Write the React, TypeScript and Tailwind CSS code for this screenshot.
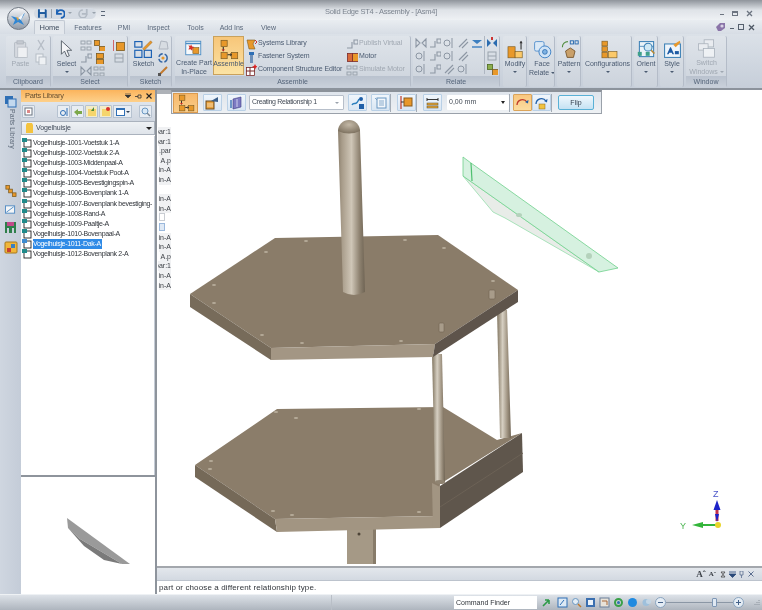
import React from "react";

const O = "#e8982a", OL = "#fbc96a", G = "#9aa3ad", BD = "#7a5a20";

function Svg({ s = 16, children, className = "" }: { s?: number; children: React.ReactNode; className?: string }) {
  return <svg width={s} height={s} viewBox={`0 0 ${s} ${s}`} className={`shrink-0 ${className}`}>{children}</svg>;
}
const R = ({ x, y, w, h, f = O, st = BD }: { x: number; y: number; w: number; h: number; f?: string; st?: string }) => (
  <rect x={x + 0.5} y={y + 0.5} width={w} height={h} fill={f} stroke={st} strokeWidth="0.8" />
);

/* Assemble icon – three orange blocks joined by a dark arrow */
const AssembleIcon = ({ s = 24 }: { s?: number }) => (
  <svg width={s} height={s} viewBox="0 0 24 24" className="shrink-0">
    <R x={3} y={1} w={7} h={7} />
    <R x={3} y={15} w={7} h={7} />
    <R x={15} y={15} w={7} h={7} />
    <path d="M6 9v5M11 18h3" stroke="#222" strokeWidth="1.2" fill="none" />
    <path d="M14 16l2 2-2 2z" fill="#222" />
    <path d="M4 12l2 2 2-2z" fill="#c22" />
  </svg>
);

const Mini = ({ k, dim = false }: { k: string; dim?: boolean }) => {
  const c = dim ? "#a6aeb8" : "#2e6fb5";
  const p = dim ? "#b8bfc8" : O;
  const x = {
    orangeCube: <><R x={3} y={3} w={8} h={8} f={p} st={dim ? "#98a0aa" : BD} /><path d="M0 1v11" stroke={dim ? "#98a0aa" : "#c33"} strokeWidth="1.4" /></>,
    pair: <><R x={1} y={1} w={5} h={5} f={p} st={dim ? "#98a0aa" : BD} /><R x={6} y={7} w={6} h={5} f={p} st={dim ? "#98a0aa" : BD} /></>,
    stack: <><R x={3} y={1} w={7} h={5} f={p} st={dim ? "#98a0aa" : BD} /><R x={3} y={7} w={7} h={5} f={p} st={dim ? "#98a0aa" : BD} /></>,
    bolt: <><rect x="4" y="1" width="5" height="3" fill={c} /><rect x="5" y="4" width="3" height="8" fill={dim ? "#b5bcc6" : "#6d8fb8"} /></>,
    sys: <><path d="M2 2h8l-2 4 2 5H4z" fill={p} stroke={dim ? "#98a0aa" : BD} strokeWidth=".6" /><path d="M10 2l2 2-2 2" stroke="#c33" fill="none" /></>,
    struct: <><R x={1} y={3} w={8} h={8} f="#fff" st="#7a2a2a" /><path d="M1 7h9M5 3v8" stroke="#7a2a2a" /><path d="M10 0l1 2 2 .5-2 1-1 2-1-2-2-1 2-.5z" fill="#d22" /></>,
    motor: <><R x={1} y={2} w={5} h={8} f="#d86a3a" st="#7a2a2a" /><R x={6} y={2} w={6} h={8} f={O} st="#7a2a2a" /></>,
    grid: <><rect x="1" y="2" width="4" height="3" fill="none" stroke={G} /><rect x="7" y="2" width="4" height="3" fill="none" stroke={G} /><rect x="1" y="8" width="4" height="3" fill="none" stroke={G} /><rect x="7" y="8" width="4" height="3" fill="none" stroke={G} /></>,
    rel: <><path d="M1 2l4 4-4 4zM11 2L7 6l4 4z" fill="none" stroke="#8d97a4" strokeWidth="1.1" /></>,
    rel2: <><path d="M1 10h5V4M8 2h4v4H8z" fill="none" stroke="#8d97a4" strokeWidth="1.1" /></>,
    rel3: <><circle cx="4" cy="6" r="3" fill="none" stroke="#8d97a4" /><path d="M9 1v10" stroke="#8d97a4" /></>,
    rel4: <><path d="M2 10L10 2M5 11l6-6" stroke="#8d97a4" strokeWidth="1.1" /></>,
    relB: <><path d="M1 3h10L6 7z" fill="#3d7fc0" /><path d="M1 10h10" stroke="#3d7fc0" strokeWidth="1.4" /></>,
    relC: <><path d="M1 2l4 4-4 4z" fill="#2b6cb0" /><path d="M11 2L7 6l4 4z" fill="#2b6cb0" /><path d="M6 0v3" stroke="#c33" strokeWidth="2" /></>,
    relD: <><R x={1} y={1} w={5} h={5} f="#8cae4d" st="#4d6a20" /><R x={6} y={6} w={6} h={6} f={O} /></>,
    relE: <><rect x="2" y="2" width="8" height="8" fill="none" stroke="#9aa3ad" /><path d="M2 6h8" stroke="#9aa3ad" /></>,
    cut: <><path d="M3 1l6 10M9 1L3 11" stroke="#b6bdc6" strokeWidth="1.4" /></>,
    copy: <><rect x="1" y="1" width="7" height="8" fill="#eef1f4" stroke="#b6bdc6" /><rect x="4" y="4" width="7" height="8" fill="#eef1f4" stroke="#b6bdc6" /></>,
    sk1: <><path d="M2 10l2-8 6 1 1 7z" fill="#d7dce2" stroke="#aeb5bf" /></>,
    sk2: <><circle cx="6" cy="6" r="4.2" fill="none" stroke="#3566a5" strokeWidth="1.4" strokeDasharray="5 2" /><circle cx="6" cy="6" r="1.6" fill={O} /></>,
    sk3: <><path d="M2 10L10 2" stroke="#c2792e" strokeWidth="2" /><rect x="1" y="8" width="3" height="3" fill="#555" /></>,
  } as Record<string, React.ReactNode>;
  return <Svg s={12}>{x[k]}</Svg>;
};

const Label = ({ children, dim = false, className = "" }: { children: React.ReactNode; dim?: boolean; className?: string }) => (
  <span className={`text-[7px] leading-[8.5px] whitespace-nowrap text-center ${dim ? "text-[#a0a8b2]" : "text-[#4a5a70]"} ${className}`}>{children}</span>
);
const Caret = ({ dim = false }: { dim?: boolean }) => <span className={`block w-0 h-0 border-x-[2px] border-x-transparent border-t-[2px] mt-[2px] ${dim ? "border-t-[#a0a8b2]" : "border-t-[#4a5a70]"}`} />;
const InlineCaret = ({ dim = false }: { dim?: boolean }) => <span className={`inline-block align-middle ml-[2px] w-0 h-0 border-x-[2px] border-x-transparent border-t-[2px] ${dim ? "border-t-[#a0a8b2]" : "border-t-[#4a5a70]"}`} />;

const Group = ({ w, title, children, className = "" }: { w: number; title?: string; children: React.ReactNode; className?: string }) => (
  <div className={`flex flex-col shrink-0 h-[51px] rounded-[2px] bg-gradient-to-b from-[#dfe4ea] to-[#ccd3dc] border-r border-[#b4bcc8] ${className}`} style={{ width: w }}>
    <div className="flex-1 flex min-h-0 overflow-hidden">{children}</div>
    {title ? <div className="h-[11px] bg-gradient-to-b from-[#b9c2ce] to-[#c9d0da] text-center text-[7px] leading-[11px] text-[#55657a]">{title}</div> : null}
  </div>
);

const BigBtn = ({ label, children, caret = false, dim = false, w }: { label: React.ReactNode; children: React.ReactNode; caret?: boolean; dim?: boolean; w?: number }) => (
  <div className="flex flex-col items-center pt-[3px] shrink-0" style={{ width: w }}>
    <div className="h-[20px] flex items-center justify-center [&>svg]:h-[19px] [&>svg]:w-auto">{children}</div>
    <Label dim={dim} className="mt-[1px]">{label}</Label>
    {caret ? <Caret dim={dim} /> : null}
  </div>
);

const SmallRow = ({ k, t, dim = false }: { k: string; t: string; dim?: boolean }) => (
  <div className="h-[13px] flex items-center gap-[1px] whitespace-nowrap">
    <Mini k={k} dim={dim} />
    <span className={`text-[7px] tracking-[-0.1px] ${dim ? "text-[#a0a8b2]" : "text-[#4a5a70]"}`}>{t}</span>
  </div>
);

const ModifyIcon = () => (
  <svg width="24" height="24" viewBox="0 0 24 24"><R x={2} y={8} w={9} h={14} /><R x={11} y={14} w={9} h={8} f={OL} /><path d="M19 2v10" stroke="#333" strokeWidth="1.4" /><path d="M17 4l2-3 2 3z" fill="#333" /></svg>
);
const FaceIcon = () => (
  <svg width="24" height="24" viewBox="0 0 24 24"><rect x="2" y="2" width="12" height="12" rx="2" fill="#dbe9f6" stroke="#5a93cf" strokeWidth="1.2" /><circle cx="15" cy="15" r="7.5" fill="#cfe3f6" stroke="#3f82c6" strokeWidth="1.2" /><circle cx="15" cy="15" r="3" fill="#7fb2e2" stroke="#2a6cb0" /></svg>
);
const PatternIcon = () => (
  <svg width="24" height="24" viewBox="0 0 24 24"><rect x="13" y="1" width="4" height="4" fill="none" stroke="#2a6cb0" strokeWidth="1.2" /><rect x="19" y="1" width="4" height="4" fill="none" stroke="#2a6cb0" strokeWidth="1.2" /><path d="M3 9a7 7 0 0 1 7-7" stroke="#4d8a3a" strokeWidth="1.4" fill="none" /><path d="M13 10l6 4-2 8H9L7 14z" fill="#c9a06a" stroke="#6a4a20" /></svg>
);
const ConfigIcon = () => (
  <svg width="30" height="24" viewBox="0 0 30 24"><R x={7} y={1} w={7} h={6} /><R x={7} y={8} w={7} h={6} /><R x={7} y={15} w={7} h={7} /><R x={15} y={14} w={11} h={8} f={OL} /></svg>
);
const OrientIcon = () => (
  <svg width="24" height="24" viewBox="0 0 24 24"><rect x="3" y="2" width="18" height="19" fill="#eaf3f8" stroke="#3a7fb5" strokeWidth="1.3" /><path d="M3 8h18" stroke="#3a7fb5" /><rect x="1" y="15" width="5" height="5" fill="#3fa08a" /><rect x="11" y="15" width="5" height="5" fill="#3fa08a" /><circle cx="14" cy="9" r="5" fill="#cfe8f4" stroke="#3a7fb5" strokeWidth="1.3" /><path d="M18 13l4 4" stroke="#b8862f" strokeWidth="2" /></svg>
);
const StyleIcon = () => (
  <svg width="24" height="24" viewBox="0 0 24 24"><rect x="2" y="5" width="20" height="17" fill="#eef5fb" stroke="#3a7fb5" strokeWidth="1.3" /><path d="M13 6L21 1l1 2-6 6z" fill={O} /><path d="M9 9l-4 9h2l1-2h3l1 2h2L10 9z" fill="#1c5aa3" /><rect x="15" y="14" width="5" height="4" fill="#1c5aa3" /></svg>
);
const SwitchIcon = () => (
  <svg width="24" height="24" viewBox="0 0 24 24"><rect x="9" y="1" width="12" height="9" fill="#e9ecf0" stroke="#a9b1bb" /><rect x="2" y="6" width="12" height="8" fill="#e9ecf0" stroke="#a9b1bb" /><rect x="8" y="12" width="14" height="11" fill="#eef1f4" stroke="#a9b1bb" /></svg>
);
const PasteIcon = () => (
  <svg width="20" height="24" viewBox="0 0 20 24"><rect x="2" y="3" width="14" height="19" rx="1" fill="#d5d9df" stroke="#adb4bd" /><rect x="5" y="1" width="8" height="4" fill="#c4c9d0" stroke="#adb4bd" /><rect x="6" y="9" width="12" height="13" fill="#eef0f3" stroke="#b8bec6" /></svg>
);
const CursorIcon = () => (
  <svg width="18" height="24" viewBox="0 0 18 24"><path d="M3 1v17l4-4 3 7 3-1-3-7h6z" fill="#f4f5f7" stroke="#4d5560" strokeWidth="1.1" /></svg>
);
const SketchIcon = () => (
  <svg width="24" height="24" viewBox="0 0 24 24"><rect x="1" y="2" width="9" height="7" fill="none" stroke="#1d62b4" strokeWidth="1.5" /><rect x="1" y="13" width="9" height="9" fill="none" stroke="#1d62b4" strokeWidth="1.5" /><rect x="13" y="13" width="9" height="9" fill="none" stroke="#1d62b4" strokeWidth="1.5" /><path d="M11 11L21 1l2 2-10 10z" fill={O} stroke="#8a5a1c" strokeWidth=".5" /></svg>
);
const CreatePartIcon = () => (
  <svg width="22" height="19" viewBox="0 0 28 24"><rect x="3" y="3" width="20" height="18" fill="#f7fafc" stroke="#4a8cc4" strokeWidth="1.2" /><path d="M3 6h20" stroke="#4a8cc4" strokeWidth="2" /><R x={12} y={11} w={8} h={8} /><path d="M10 7l1.5 3 3 .5-2.5 2-.5 3-2-2-3 .5 1.5-3-1.5-2.5 3 .5z" fill="#d8322b" /></svg>
);

const Ribbon = () => (
  <div className="h-[56px] shrink-0 flex gap-[2px] pl-[6px] pt-[2px] bg-gradient-to-b from-[#dbe1e8] to-[#c6ced9] border-b-2 border-[#8c939c]">
    <Group w={45} title="Clipboard">
      <BigBtn label="Paste" dim w={29}><PasteIcon /></BigBtn>
      <div className="flex flex-col gap-[2px] pt-[3px]"><Mini k="cut" /><Mini k="copy" /></div>
    </Group>
    <Group w={75} title="Select">
      <BigBtn label="Select" caret w={27}><CursorIcon /></BigBtn>
      <div className="grid grid-cols-[13px_13px_20px] gap-y-[1px] pt-[3px] h-fit">
        <Mini k="grid" /><Mini k="pair" /><span className="pl-[7px]"><Mini k="orangeCube" /></span>
        <Mini k="rel2" /><Mini k="stack" /><span className="pl-[7px]"><Mini k="relE" /></span>
        <Mini k="rel" /><Mini k="grid" />
      </div>
    </Group>
    <Group w={42} title="Sketch">
      <BigBtn label="Sketch" w={27}><SketchIcon /></BigBtn>
      <div className="flex flex-col gap-[1px] pt-[3px]"><Mini k="sk1" /><Mini k="sk2" /><Mini k="sk3" /></div>
    </Group>
    <Group w={236} title="Assemble" className="ml-[1px]">
      <div className="w-[38px] shrink-0 flex flex-col items-center pt-[3px]">
        <CreatePartIcon />
        <Label className="mt-[2px]">Create Part<br />In-Place</Label>
      </div>
      <div className="w-[31px] h-[39px] shrink-0 flex flex-col items-center pt-[2px] bg-gradient-to-b from-[#f7c679] to-[#fbe3a4] border border-[#c9a15c]">
        <AssembleIcon s={21} />
        <Label className="text-[#3f4d60]">Assemble</Label>
      </div>
      <div className="flex flex-col pl-[1px] pt-[1px] w-[102px] shrink-0">
        <SmallRow k="sys" t="Systems Library" />
        <SmallRow k="bolt" t="Fastener System" />
        <SmallRow k="struct" t="Component Structure Editor" />
      </div>
      <div className="flex flex-col pt-[1px]">
        <SmallRow k="rel2" t="Publish Virtual" dim />
        <SmallRow k="motor" t="Motor" />
        <SmallRow k="grid" t="Simulate Motor" dim />
      </div>
    </Group>
    <Group w={87} title="Relate">
      <div className="grid grid-cols-5 gap-x-[2px] gap-y-[1px] pl-[2px] pt-[1px] h-fit">
        <Mini k="rel" /><Mini k="rel2" /><Mini k="rel3" /><Mini k="rel4" /><Mini k="relB" />
        <Mini k="rel3" /><Mini k="rel2" /><Mini k="rel3" /><Mini k="rel4" /><span />
        <Mini k="rel3" /><Mini k="rel2" /><Mini k="rel4" /><Mini k="rel3" /><span />
      </div>
      <div className="flex flex-col gap-[1px] pl-[1px] pt-[1px] border-l border-[#aeb6c1] ml-[1px] h-[38px]">
        <Mini k="relC" /><Mini k="relE" /><Mini k="relD" />
      </div>
    </Group>
    <Group w={24} className="ml-[1px]"><BigBtn label="Modify" caret w={24}><ModifyIcon /></BigBtn></Group>
    <Group w={26}><BigBtn label={<>Face<br />Relate<InlineCaret /></>} w={26}><FaceIcon /></BigBtn></Group>
    <Group w={24}><BigBtn label="Pattern" caret w={24}><PatternIcon /></BigBtn></Group>
    <Group w={49}><BigBtn label="Configurations" caret w={49}><ConfigIcon /></BigBtn></Group>
    <Group w={24}><BigBtn label="Orient" caret w={24}><OrientIcon /></BigBtn></Group>
    <Group w={24}><BigBtn label="Style" caret w={24}><StyleIcon /></BigBtn></Group>
    <Group w={41} title="Window"><BigBtn dim label={<>Switch<br />Windows<InlineCaret dim /></>} w={41}><SwitchIcon /></BigBtn></Group>
  </div>
);

const TitleBar = () => (
  <div className="h-[20px] shrink-0 flex items-center bg-gradient-to-b from-[#8f949b] via-[#dfe3e8] to-[#eef1f4] pt-[3px] relative">
    <div className="absolute left-[7px] top-[7px] w-[23px] h-[23px] rounded-full border border-[#6f7782] bg-gradient-to-b from-[#f7f8fa] to-[#8f9aa8] flex items-center justify-center z-10">
      <svg width="17" height="17" viewBox="0 0 17 17"><path d="M1 6l7 2 7-5-4 7 3 5-6-3-5 3 2-5z" fill="#2f86d4" /><path d="M6 7l3 1-1 3z" fill="#f0a530" /><path d="M8 8l6-5-3 7z" fill="#f4f7fa" /></svg>
    </div>
    <div className="ml-[34px] w-[62px] h-[11px] rounded-full bg-[#d5dbe3] flex items-center gap-[3px] pl-[3px] mt-[3px]">
      <svg width="11" height="11" viewBox="0 0 11 11"><path d="M1 1h8l1 1v8H1z" fill="#1d5a9e" /><rect x="3" y="1" width="5" height="3" fill="#e9eef4" /><rect x="3" y="6" width="5" height="4" fill="#cfd8e2" /></svg>
      <span className="w-px h-[9px] bg-[#9aa3ad]" />
      <svg width="11" height="11" viewBox="0 0 11 11"><path d="M2 1v5h5" stroke="#1d62b4" strokeWidth="1.8" fill="none" /><path d="M2 6a4 4 0 1 1 4 4" stroke="#1d62b4" strokeWidth="2" fill="none" /></svg>
      <span className="block w-0 h-0 border-x-[2px] border-x-transparent border-t-[2px] border-t-[#9aa3ad]" />
      <svg width="11" height="10" viewBox="0 0 11 10" className="ml-[3px]"><path d="M9 1v5H4" stroke="#b2bac4" strokeWidth="1.8" fill="none" /><path d="M9 6a4 4 0 1 1-4-4" stroke="#b2bac4" strokeWidth="1.6" fill="none" /></svg>
      <span className="block w-0 h-0 border-x-[2px] border-x-transparent border-t-[2px] border-t-[#9aa3ad]" />
    </div>
    <span className="ml-[5px] mt-[3px] block w-[4px] h-[5px] border-t border-b border-[#5a6676]" />
    <span className="absolute left-[325px] top-[7px] text-[7.5px] leading-[10px] text-[#7d8590] whitespace-nowrap tracking-[-0.26px]">Solid Edge ST4 - Assembly - [Asm4]</span>
    <div className="ml-auto flex items-center gap-[8px] pr-[9px] mt-[3px] text-[#6c7480]">
      <span className="block w-[4px] h-[1px] bg-[#6c7480] mt-[3px]" />
      <span className="block w-[6px] h-[5px] border border-t-2 border-[#6c7480]" />
      <svg width="7" height="7" viewBox="0 0 7 7"><path d="M1 1l5 5M6 1L1 6" stroke="#6c7480" strokeWidth="1.3" /></svg>
    </div>
  </div>
);

const TabRow = () => {
  const tabs: [string, number, number][] = [["Features", 10, 26], ["PMI", 17, 12], ["Inspect", 17, 23], ["Tools", 17, 17], ["Add Ins", 16, 23], ["View", 18, 15]];
  return (
    <div className="h-[14px] shrink-0 flex items-end bg-gradient-to-b from-[#e9edf1] to-[#d7dde5] pl-[34px]">
      <div className="w-[31px] h-[14px] bg-[#e4e8ed] border border-b-0 border-[#c2c9d3] rounded-t-[2px] text-center text-[7.5px] leading-[13px] text-[#3d4a5c]">Home</div>
      {tabs.map(([t, m, w]) => (
        <span key={t} className="flex justify-center whitespace-nowrap text-[7px] leading-[13px] text-[#5a687b]" style={{ marginLeft: m, width: w }}>{t}</span>
      ))}
      <div className="ml-auto flex items-center gap-[4px] pr-[7px] h-[14px]">
        <svg width="11" height="10" viewBox="0 0 11 10"><path d="M1 5l4-4h5v5l-4 3H3z" fill="#8a74a8" /><circle cx="7" cy="4" r="1.6" fill="#d9d2e6" /></svg>
        <span className="block w-[4px] h-[1px] bg-[#55606e] mt-[3px]" />
        <span className="block w-[6px] h-[6px] border border-[#55606e]" />
        <svg width="7" height="7" viewBox="0 0 7 7"><path d="M1 1l5 5M6 1L1 6" stroke="#4d5764" strokeWidth="1.3" /></svg>
      </div>
    </div>
  );
};

const PARTS = ["1001-Voetstuk 1-A", "1002-Voetstuk 2-A", "1003-Middenpaal-A", "1004-Voetstuk Poot-A", "1005-Bevestigingspin-A", "1006-Bovenplank 1-A", "1007-Bovenplank bevestiging-", "1008-Rand-A", "1009-Paaltje-A", "1010-Bovenpaal-A", "1011-Dak-A", "1012-Bovenplank 2-A"];

const DocIcon = ({ sel }: { sel?: boolean }) => (
  <svg width="10" height="10" viewBox="0 0 10 10" className="shrink-0">
    <rect x="2" y="2" width="7" height="7" fill="#fff" stroke="#222" strokeWidth=".9" />
    <rect x="0" y="0" width="5" height="4" fill={sel ? "#3d8bd0" : "#1f8a8a"} />
  </svg>
);

const Rail = () => (
  <div className="w-[21px] shrink-0 bg-gradient-to-r from-[#cfd6e0] to-[#c4ccd8] flex flex-col items-center pt-[5px]">
    <svg width="13" height="13" viewBox="0 0 13 13"><rect x="1" y="1" width="8" height="8" fill="#2f6fb5" /><rect x="4" y="4" width="8" height="8" fill="#c3d8ee" stroke="#2f6fb5" /></svg>
    <span className="[writing-mode:vertical-rl] text-[7px] leading-[10px] text-[#5e6a7a] mt-[1px] ml-[2px] whitespace-nowrap">Parts Library</span>
    <svg width="13" height="12" viewBox="0 0 13 13" className="mt-[36px]"><R x={1} y={0} w={4} h={4} /><R x={4} y={4} w={4} h={4} /><R x={8} y={8} w={4} h={4} /></svg>
    <svg width="13" height="11" viewBox="0 0 13 12" className="mt-[7px]"><rect x="1" y="2" width="10" height="8" fill="#f4f6f8" stroke="#4e89c2" /><path d="M2 9l8-6" stroke="#4e89c2" /></svg>
    <svg width="13" height="13" viewBox="0 0 13 13" className="mt-[6px]"><path d="M1 1h11v11h-2V7H8v5H5V7H3v5H1z" fill="#2e7f4a" /><path d="M3 1h7v4H3z" fill="#c24a8a" /></svg>
    <svg width="14" height="13" viewBox="0 0 14 13" className="mt-[7px]"><rect x="1" y="1" width="12" height="11" rx="1" fill="#f1b63a" stroke="#a6781c" /><rect x="7" y="3" width="4" height="4" fill="#3b7fc0" /><rect x="3" y="7" width="4" height="4" fill="#c8402f" /></svg>
  </div>
);

const ToolBtn = ({ children, className = "" }: { children: React.ReactNode; className?: string }) => (
  <div className={`w-[13px] h-[13px] flex items-center justify-center bg-[#e8edf3] border border-[#b6c2d0] rounded-[1px] ${className}`}>{children}</div>
);

const PartsPanel = () => (
  <div className="w-[134px] shrink-0 flex flex-col bg-white">
    <div className="h-[12px] shrink-0 bg-gradient-to-b from-[#fbb45c] to-[#fdd08a] flex items-center pl-[4px] pr-[3px]">
      <span className="text-[7.5px] leading-[12px] text-[#6a5232] tracking-[-0.3px]">Parts Library</span>
      <div className="ml-auto flex items-center gap-[4px]">
        <svg width="6" height="6" viewBox="0 0 6 6"><path d="M0 0h6M0 2h6L3 5z" stroke="#333" strokeWidth=".6" fill="#333" /></svg>
        <svg width="7" height="5" viewBox="0 0 7 5"><path d="M0 2.5h3M3 1v3h3V1z" stroke="#333" strokeWidth=".8" fill="none" /></svg>
        <svg width="6" height="6" viewBox="0 0 6 6"><path d="M.5.5l5 5M5.5.5l-5 5" stroke="#222" strokeWidth="1.1" /></svg>
      </div>
    </div>
    <div className="h-[19px] shrink-0 flex items-center pl-[1px] pr-[3px] bg-gradient-to-b from-[#dfe5ec] to-[#cfd6e0]">
      <ToolBtn><svg width="9" height="9" viewBox="0 0 9 9"><rect x="1" y="1" width="7" height="7" fill="#fff" stroke="#6a7480" /><rect x="3" y="3" width="3" height="3" fill="#d88" /></svg></ToolBtn>
      <div className="ml-auto flex gap-[1px] items-center">
        <ToolBtn><svg width="10" height="10" viewBox="0 0 10 10"><circle cx="4" cy="6" r="2.5" fill="none" stroke="#2f6fb5" /><path d="M8 1v8" stroke="#2f6fb5" /></svg></ToolBtn>
        <ToolBtn><svg width="10" height="10" viewBox="0 0 10 10"><path d="M1 5l4-3v2h4v3H5v2z" fill="#7ba84a" /></svg></ToolBtn>
        <ToolBtn className="bg-[#f3ecc9]"><svg width="10" height="10" viewBox="0 0 10 10"><rect x="1" y="2" width="8" height="7" fill="#f5d56c" /><path d="M7 0l-3 4h3z" fill="#4d8a3a" /></svg></ToolBtn>
        <ToolBtn className="bg-[#f3ecc9]"><svg width="10" height="10" viewBox="0 0 10 10"><rect x="1" y="2" width="8" height="7" fill="#f5d56c" /><circle cx="7" cy="2" r="2" fill="#d8322b" /></svg></ToolBtn>
        <div className="w-[19px] h-[13px] bg-[#e8edf3] border border-[#b6c2d0] flex items-center justify-center gap-[1px]">
          <span className="block w-[9px] h-[8px] bg-white border border-[#2f6fb5] border-t-2" />
          <span className="block w-0 h-0 border-x-[2px] border-x-transparent border-t-[2px] border-t-[#2f3f55]" />
        </div>
        <ToolBtn className="ml-[6px]"><svg width="10" height="10" viewBox="0 0 10 10"><circle cx="4" cy="4" r="3" fill="#d8e8f6" stroke="#6a97c2" /><path d="M6 6l3 3" stroke="#7a8794" strokeWidth="1.4" /></svg></ToolBtn>
      </div>
    </div>
    <div className="h-[14px] shrink-0 mb-[1px] flex items-center pl-[3px] pr-[2px] bg-gradient-to-b from-[#eef1f4] to-[#dfe4ea] border border-[#aab2bd]">
      <svg width="9" height="10" viewBox="0 0 9 10"><path d="M2 0h5l1 2v8H1V2z" fill="#f4c33e" /></svg>
      <span className="ml-[2px] text-[7px] text-[#3e4856] tracking-[-0.1px]">Vogelhuisje</span>
      <span className="ml-auto block w-0 h-0 border-x-[3px] border-x-transparent border-t-[3px] border-t-[#222]" />
    </div>
    <div className="flex-1 min-h-0 flex flex-col pt-[2px] pl-[1px] border-r border-[#c5ccd6] bg-white overflow-hidden">
      {PARTS.map((p, i) => (
        <div key={p} className="h-[10.08px] flex items-center gap-[1px] shrink-0">
          <DocIcon sel={i === 10} />
          <span className={`text-[7px] leading-[10px] whitespace-nowrap tracking-[-0.33px] ${i === 10 ? "bg-[#2f8ae6] text-white pr-[1px]" : "text-[#30343a]"}`}>Vogelhuisje-{p}</span>
        </div>
      ))}
    </div>
    <div className="h-[119px] shrink-0 border-t-2 border-[#8e949c] bg-white">
      <svg width="134" height="117" viewBox="21 477 134 117" className="block">
        <path d="M67 518l63 46h-8l-42-25-12-11z" fill="#9a9a9a" />
        <path d="M68 528l12 11 42 25-18-4-20-14z" fill="#7a7a7a" />
      </svg>
    </div>
  </div>
);

const Tbtn = ({ children, on = false, className = "" }: { children: React.ReactNode; on?: boolean; className?: string }) => (
  <div className={`w-[19px] h-[17px] shrink-0 flex items-center justify-center rounded-[1px] border ${on ? "bg-gradient-to-b from-[#f9c77e] to-[#fbdca0] border-[#dba45a]" : "bg-gradient-to-b from-[#f0f6fc] to-[#d9e6f3] border-[#b9d0e6]"} ${className}`}>{children}</div>
);
const Sep = () => <span className="w-px h-[18px] bg-[#a4acb6] shrink-0" />;

const FloatingToolbar = () => (
  <div className="absolute left-[14px] top-0 w-[431px] h-[24px] z-10 flex items-center pl-[1px] bg-gradient-to-b from-[#dfe5ec] to-[#eef1f4] border border-[#9aa1aa] border-t-2 border-t-[#8b9199]">
    <div className="w-[25px] h-[20px] shrink-0 bg-gradient-to-b from-[#f7b86a] to-[#f9cd8a] border border-[#d99a50] flex items-center justify-center"><AssembleIcon s={18} /></div>
    <Tbtn className="ml-[5px]"><svg width="15" height="14" viewBox="0 0 15 14"><rect x="1" y="5" width="8" height="8" fill="#e9a23b" stroke="#6a4a20" /><path d="M6 5l7-4v5z" fill="#3b5f8a" /><path d="M2 8h6M2 10h6" stroke="#fff" strokeWidth=".6" /></svg></Tbtn>
    <Tbtn className="ml-[5px]"><svg width="14" height="14" viewBox="0 0 14 14"><path d="M3 3l8-2v10l-8 2z" fill="#7d7ac2" stroke="#3d3a80" strokeWidth=".6" /><path d="M1 4v8" stroke="#1f5fa8" strokeWidth="1.2" /><path d="M7 3v8" stroke="#cfd0ee" /></svg></Tbtn>
    <div className="ml-[3px] w-[95px] h-[15px] shrink-0 flex items-center pl-[2px] pr-[4px] bg-white border border-[#b7bfca] rounded-[1px]">
      <span className="text-[7px] whitespace-nowrap text-[#444c57] tracking-[-0.35px]">Creating Relationship 1</span>
      <span className="ml-auto block w-0 h-0 border-x-[2px] border-x-transparent border-t-[2px] border-t-[#9aa2ac]" />
    </div>
    <Tbtn className="ml-[4px]"><svg width="15" height="14" viewBox="0 0 15 14"><path d="M2 9C4 5 6 11 9 3" stroke="#2b7fbe" strokeWidth="1.4" fill="none" /><circle cx="11" cy="3" r="2" fill="#1f5fa8" /><rect x="9" y="8" width="5" height="5" fill="#1f5fa8" /></svg></Tbtn>
    <Tbtn className="ml-[4px]"><svg width="13" height="13" viewBox="0 0 13 13"><rect x="3" y="2" width="9" height="10" fill="#f3f7fb" stroke="#6a97c2" /><path d="M5 5h5M5 7h5M5 9h5M1 2l2 2" stroke="#6a97c2" strokeWidth=".8" /></svg></Tbtn>
    <Sep />
    <Tbtn className="ml-[6px]"><svg width="14" height="13" viewBox="0 0 14 13"><path d="M1 0v13" stroke="#c0392b" strokeWidth="1.2" /><path d="M1 6h3" stroke="#333" /><rect x="4" y="2" width="8" height="8" fill="#e8982a" stroke="#8a5a1c" /></svg></Tbtn>
    <Sep />
    <Tbtn className="ml-[6px]"><svg width="13" height="12" viewBox="0 0 13 12"><path d="M1 1v3M12 1v3M1 2.5h11" stroke="#222" strokeWidth=".9" /><rect x="1" y="6" width="11" height="2" fill="#e8a93a" stroke="#5a4a20" strokeWidth=".5" /><rect x="1" y="9" width="11" height="2" fill="#e8a93a" stroke="#5a4a20" strokeWidth=".5" /></svg></Tbtn>
    <div className="ml-[5px] w-[62px] h-[15px] shrink-0 flex items-center pl-[2px] pr-[4px] bg-white rounded-[1px]">
      <span className="text-[7px] text-[#444c57]">0,00 mm</span>
      <span className="ml-auto block w-0 h-0 border-x-[2.5px] border-x-transparent border-t-[3px] border-t-[#222]" />
    </div>
    <Sep />
    <Tbtn on className="ml-[3px]"><svg width="15" height="13" viewBox="0 0 15 13"><path d="M2 9a5.5 5.5 0 0 1 10-3" stroke="#c0392b" strokeWidth="1.3" fill="none" /><path d="M10 6l3 1.5.5-3.5z" fill="#1f5fa8" /></svg></Tbtn>
    <Tbtn><svg width="15" height="14" viewBox="0 0 15 14"><path d="M2 8a5.5 5.5 0 0 1 10-3" stroke="#1f5fa8" strokeWidth="1.3" fill="none" /><path d="M10 5l3 1.5.5-3.5z" fill="#1f5fa8" /><rect x="5" y="8" width="6" height="5" fill="#f2c23e" stroke="#8a6a1c" strokeWidth=".5" /></svg></Tbtn>
    <Sep />
    <div className="ml-[6px] w-[36px] h-[15px] shrink-0 rounded-[2px] border border-[#59b1d6] bg-gradient-to-b from-[#f0f8fd] to-[#c5e2f3] text-center text-[7px] leading-[13px] text-[#33404f]">Flip</div>
  </div>
);

const DOTS_TOP = [[306,241],[266,252],[214,285],[214,303],[262,335],[302,343],[401,341],[405,240],[493,281],[444,248]];
const DOTS_LOW = [[276,412],[296,418],[211,461],[210,469],[273,511],[292,515],[419,409],[419,512]];

const Model = () => (
  <svg width="605" height="476" viewBox="157 90 605 476" className="absolute inset-0">
    <defs>
      <linearGradient id="pole" x1="0" x2="1" y1="0" y2="0">
        <stop offset="0" stopColor="#8d816f" /><stop offset=".15" stopColor="#a89c8a" /><stop offset=".5" stopColor="#cfc6b7" /><stop offset=".8" stopColor="#8e8270" /><stop offset="1" stopColor="#6f6454" />
      </linearGradient>
      <linearGradient id="leg" x1="0" x2="1" y1="0" y2="0">
        <stop offset="0" stopColor="#80745f" /><stop offset=".4" stopColor="#d6cfc2" /><stop offset=".75" stopColor="#9d917f" /><stop offset="1" stopColor="#6f6454" />
      </linearGradient>
      <radialGradient id="dome" cx=".5" cy=".35" r=".7">
        <stop offset="0" stopColor="#c3b8a6" /><stop offset="1" stopColor="#7a6e5c" />
      </radialGradient>
    </defs>

    {/* lower stem */}
    <rect x="347" y="528" width="29" height="36" fill="#a59986" />
    <rect x="373" y="528" width="3" height="36" fill="#877b69" />
    <circle cx="359" cy="534" r="1.5" fill="#4d4437" />

    {/* lower plate */}
    <path d="M195 465 L277 409 L443 407 L497 440 L522 433 L440 484 L438 516 L275 519Z" fill="#8b7d6a" />
    <path d="M195 465 L275 519 L277 532 L195 477Z" fill="#756958" />
    <path d="M275 519 L438 516 L440 528 L277 532Z" fill="#a29582" />
    {DOTS_LOW.map(([x, y]) => <ellipse key={x + "," + y} cx={x} cy={y} rx="2.2" ry="1.1" fill="#b6ab99" />)}

    {/* legs */}
    <path d="M497 310 L507 310 L511 438 L500 438Z" fill="url(#leg)" />
    <path d="M432 354 L442 354 L445 482 L435 482Z" fill="url(#leg)" />
    <ellipse cx="440" cy="482" rx="5" ry="2" fill="#8f8371" />

    {/* lower wall */}
    <path d="M432 483 L440 487 L440 528 L433 528Z" fill="#a29582" />
    <path d="M440 486 L522 433 L523 472 L440 528Z" fill="#5f564c" />
    <path d="M440 507 L523 453" stroke="#6c6256" strokeWidth="1" fill="none" />

    {/* top plate */}
    <path d="M190 294 L275 238 L438 235 L518 290 L435 344 L271 348Z" fill="#8a7c69" />
    <path d="M190 294 L271 348 L271 360 L190 307Z" fill="#776b5a" />
    <path d="M271 348 L435 344 L433 357 L271 360Z" fill="#a39684" />
    <path d="M435 344 L518 290 L518 302 L433 357Z" fill="#5e544b" />
    {DOTS_TOP.map(([x, y]) => <ellipse key={x + "," + y} cx={x} cy={y} rx="2" ry="1" fill="#b6ab99" />)}
    <rect x="439" y="323" width="5" height="9" rx="1" fill="#a89c8a" stroke="#6e6352" strokeWidth=".6" />
    <rect x="489" y="290" width="6" height="9" rx="1" fill="#a89c8a" stroke="#6e6352" strokeWidth=".6" />

    {/* centre pole */}
    <path d="M338 130 L360 130 L365 292 Q354 298 343 292Z" fill="url(#pole)" />
    <path d="M338 131 A11 11 0 0 1 360 131 Q349 136 338 131Z" fill="url(#dome)" />

    {/* ghost part */}
    <path d="M463 176 L493 212 L505 218 L599 272Z" fill="#e8ece8" stroke="#8adba3" strokeWidth=".7" />
    <path d="M463 157 L471 163 L618 268 L599 272 L463 176Z" fill="#d6f1e0" stroke="#6fd08c" strokeWidth=".8" />
    <path d="M471 163 L472 181" stroke="#4fc070" strokeWidth="1.2" />
    <ellipse cx="519" cy="215" rx="3" ry="2" fill="#b4d2bb" />
    <ellipse cx="589" cy="256" rx="3" ry="3" fill="#b4d2bb" />

    {/* triad */}
    <path d="M717 521 V506" stroke="#c2304a" strokeWidth="3" />
    <path d="M713.5 510 L717 500 L720.5 510Z" fill="#1c22c8" />
    <path d="M715 514 L719 514 L717 522Z" fill="#1c22c8" />
    <path d="M702 525 H716" stroke="#33b53a" strokeWidth="2" />
    <path d="M692 525 L703 522 L703 528Z" fill="#33b53a" />
    <circle cx="718" cy="525" r="3" fill="#e9d52b" />
    <text x="713" y="497" fontSize="9" fontFamily="Liberation Sans" fill="#4a55c8">Z</text>
    <text x="680" y="529" fontSize="9" fontFamily="Liberation Sans" fill="#4cb552">Y</text>
  </svg>
);

const STUBS = ["par:1", "par:1", ".par", "A.p", "in-A", "in-A", "", "in-A", "in-A", "#", "*", "in-A", "in-A", "A.p", "par:1", "in-A", "in-A"];

const Canvas = () => (
  <div className="flex-1 min-h-0 relative bg-white overflow-hidden">
    <div className="h-[4px] w-[14px] bg-[#aeb2b8]" />
    <div className="pt-[33px] pl-[1px] w-[13px] flex flex-col">
      {STUBS.map((s, i) => (
        <div key={i} className="h-[9.6px] w-[13px] overflow-hidden flex justify-end">
          {s === "#" || s === "*" ? (
            <span className={`block w-[6px] h-[8px] border mr-[6px] ${s === "*" ? "border-[#9ab8dc] bg-[#dfe9f5]" : "border-[#c9cdd3]"}`} />
          ) : s ? (
            <span className="text-[7px] leading-[9px] text-[#3c4046] bg-[#f0f1f3] whitespace-nowrap">{s}</span>
          ) : null}
        </div>
      ))}
    </div>
    <Model />
    <FloatingToolbar />
  </div>
);

const PromptBar = () => (
  <div className="h-[28px] shrink-0 flex flex-col border-t-2 border-[#a3a7ad]">
    <div className="h-[13px] shrink-0 bg-gradient-to-b from-[#e3e7ec] to-[#d3d9e1] flex items-center justify-end pr-[7px] border-b border-[#bcc3cd]">
      <span className="w-[12px] flex justify-center text-[9px] leading-none font-['Liberation_Serif'] font-bold text-[#3a3f46]">Aˆ</span>
      <span className="w-[11px] flex justify-center text-[7px] leading-none font-['Liberation_Serif'] font-bold text-[#3a3f46]">Aˇ</span>
      <span className="w-[9px] flex justify-center"><svg width="6" height="7" viewBox="0 0 6 7"><path d="M1 1l4 0-2 2.5zM1 6h4L3 3.5z" fill="none" stroke="#444" strokeWidth=".8" /></svg></span>
      <span className="w-[10px] flex justify-center"><svg width="7" height="7" viewBox="0 0 7 7"><path d="M0 1h7M0 3h7L3.5 6.5z" stroke="#2b4a7a" strokeWidth=".8" fill="#2b4a7a" /></svg></span>
      <span className="w-[9px] flex justify-center"><svg width="5" height="7" viewBox="0 0 5 7"><path d="M1 0h3v4H1zM2.5 4v3" stroke="#5a6e90" strokeWidth=".8" fill="none" /></svg></span>
      <span className="w-[9px] flex justify-center"><svg width="6" height="6" viewBox="0 0 6 6"><path d="M.5.5l5 5M5.5.5l-5 5" stroke="#5a6e90" strokeWidth="1" /></svg></span>
    </div>
    <div className="flex-1 bg-white pl-[2px] text-[8px] leading-[13px] text-[#30343a] tracking-[0.13px]">part or choose a different relationship type.</div>
  </div>
);

const StatusBar = () => (
  <div className="h-[16px] shrink-0 flex items-center bg-gradient-to-b from-[#dde2e8] to-[#aeb5be] border-t border-[#eef1f4]">
    <div className="ml-[331px] w-px h-full bg-[#b9bfc7]" />
    <div className="ml-[122px] w-[83px] h-[13px] bg-white text-[7px] leading-[13px] pl-[2px] text-[#30343a]">Command Finder</div>
    <div className="ml-[5px] flex items-center gap-[3px]">
      <svg width="10" height="10" viewBox="0 0 10 10"><path d="M1 8L7 2M7 2H3M7 2v4" stroke="#2e9a48" strokeWidth="1.6" fill="none" /></svg>
      <svg width="11" height="11" viewBox="0 0 11 11" className="ml-[2px]"><rect x="1" y="1" width="9" height="9" fill="#dde9f4" stroke="#2f6fb5" /><path d="M3 8l4-5" stroke="#2f6fb5" /></svg>
      <svg width="11" height="11" viewBox="0 0 11 11"><circle cx="4.5" cy="4.5" r="3" fill="#e3edf6" stroke="#6a97c2" /><path d="M7 7l3 3" stroke="#c0782a" strokeWidth="1.4" /></svg>
      <svg width="11" height="11" viewBox="0 0 11 11"><rect x="1" y="1" width="9" height="9" fill="#3a6fb0" /><rect x="3" y="3" width="5" height="5" fill="#eaf2fa" /></svg>
      <svg width="11" height="11" viewBox="0 0 11 11"><rect x="1" y="1" width="9" height="9" fill="#e8e2d8" stroke="#6a7f9a" /><path d="M3 4h5v4" stroke="#a8683a" fill="none" /></svg>
      <svg width="11" height="11" viewBox="0 0 11 11"><circle cx="5.5" cy="5.5" r="3.5" fill="none" stroke="#38a048" strokeWidth="2" /><circle cx="5.5" cy="5.5" r="1.5" fill="#2f6fb5" /></svg>
      <svg width="11" height="11" viewBox="0 0 11 11"><circle cx="5.5" cy="5.5" r="4.5" fill="#1f8ae0" /></svg>
      <svg width="11" height="11" viewBox="0 0 11 11"><circle cx="5" cy="5.5" r="3.5" fill="#9ec0dc" /><circle cx="7.5" cy="4.5" r="2.5" fill="#c3d6e6" /></svg>
    </div>
    <div className="ml-[3px] w-[89px] flex items-center">
      <span className="w-[11px] h-[11px] rounded-full border border-[#8aa4bf] bg-[#e4ecf4] shrink-0 flex items-center justify-center"><span className="block w-[5px] h-px bg-[#44628a]" /></span>
      <div className="flex-1 h-px bg-[#8b97a5] relative">
        <span className="absolute left-[46px] top-[-4px] w-[5px] h-[9px] bg-[#dfe8f2] border border-[#7e97b5] rounded-[1px]" />
      </div>
      <span className="w-[11px] h-[11px] rounded-full border border-[#8aa4bf] bg-[#e4ecf4] shrink-0 flex items-center justify-center relative"><span className="block w-[5px] h-px bg-[#44628a]" /><span className="absolute block w-px h-[5px] bg-[#44628a]" /></span>
    </div>
    <svg width="8" height="8" viewBox="0 0 8 8" className="ml-[8px]"><path d="M7 1v1M5 3v1M7 3v1M3 5v1M5 5v1M7 5v1" stroke="#8c949e" /></svg>
  </div>
);

export default function App() {
  return (
    <div className="w-[762px] h-[610px] overflow-hidden flex flex-col bg-[#ccd3dc] font-['Liberation_Sans',sans-serif] blur-[0.3px]">
      <TitleBar />
      <TabRow />
      <Ribbon />
      <div className="flex-1 min-h-0 flex">
        <Rail />
        <PartsPanel />
        <div className="w-[2px] shrink-0 bg-[#8e949c]" />
        <div className="flex-1 min-w-0 flex flex-col">
          <Canvas />
          <PromptBar />
        </div>
      </div>
      <StatusBar />
    </div>
  );
}
